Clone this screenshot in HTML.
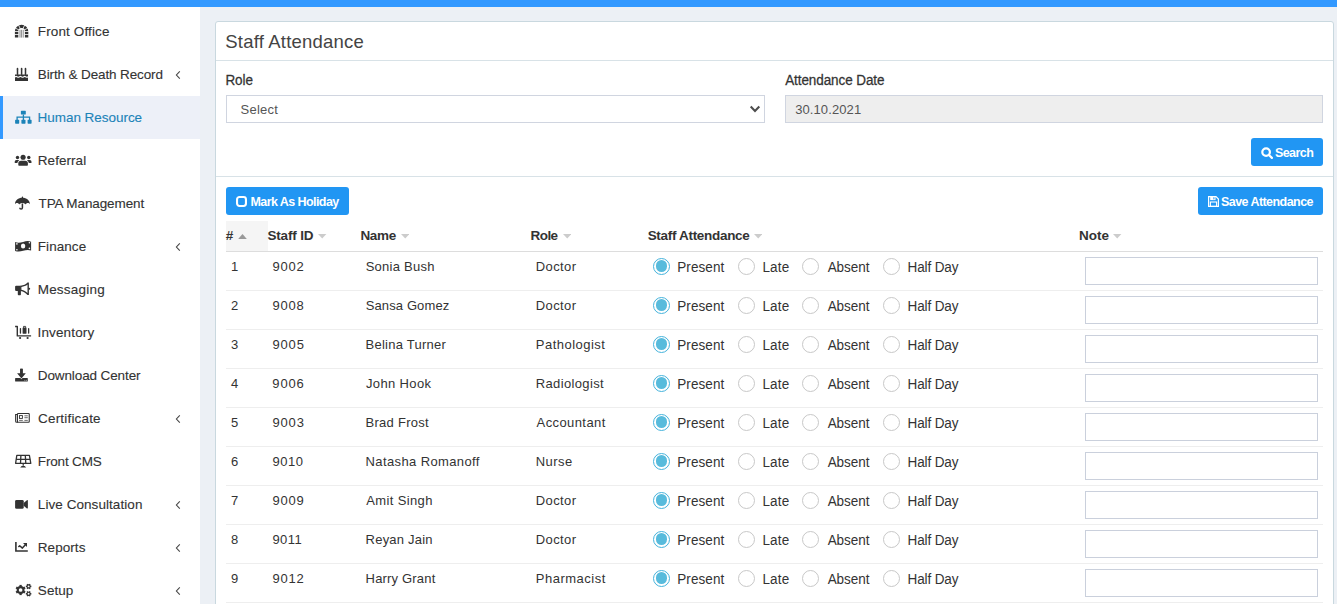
<!DOCTYPE html>
<html>
<head>
<meta charset="utf-8">
<title>Staff Attendance</title>
<style>
*{box-sizing:border-box;margin:0;padding:0}
html,body{width:1337px;height:604px;overflow:hidden}
body{background:#ecf0f5;font-family:"Liberation Sans",sans-serif;font-size:13px;color:#333;position:relative}
span{white-space:nowrap}
.topbar{position:absolute;left:0;top:0;width:1337px;height:7px;background:#3399ff}
.sidebar{position:absolute;left:0;top:7px;width:200px;height:597px;background:#fff;overflow:hidden}
.mi{position:absolute;left:0;width:200px;height:43px;color:#333;font-size:13.5px}
.mi .tx{position:absolute;left:38px;top:0px;line-height:43px;white-space:nowrap;-webkit-text-stroke:0.12px currentColor}
.mi svg.ic{position:absolute;left:0;top:0;width:36px;height:43px;color:#333}
.mi .ch{position:absolute;left:174px;top:16px;width:8px;height:12px}
.mi.act{background:#edf0f8;border-left:3px solid #3399ff;color:#1c83b8}
.mi.act .tx{left:35px}
.mi.act svg.ic{color:#1c83b8}
.panel{position:absolute;left:215px;top:21px;width:1119px;height:600px;background:#fff;border:1px solid #c9d8df;border-radius:3px}
.ptitle{position:absolute;left:10px;top:0px;height:39px;line-height:39px;font-size:18.5px;color:#444;white-space:nowrap}
.hr{position:absolute;left:0;width:1117px;height:1px;background:#d8e2e7}
.lbl{position:absolute;font-size:13.5px;color:#333;white-space:nowrap;line-height:16px;-webkit-text-stroke:0.25px #333;transform:scale(1,1.04);transform-origin:0 70%}
.sel{position:absolute;left:10px;top:73px;width:539px;height:28px;border:1px solid #d0d5e0;background:#fff;font-size:13px;line-height:27px;padding-left:14px;color:#555}
.sel .caret{position:absolute;right:3.4px;top:9.3px;width:12px;height:8px}
.dt{position:absolute;left:569px;top:73px;width:538px;height:28px;border:1px solid #d0d5e0;background:#eee;font-size:13px;line-height:27px;padding-left:10px;color:#555}
.btn{position:absolute;height:28px;background:#2196f3;color:#fff;border-radius:3px;font-size:12.5px;white-space:nowrap;font-weight:bold}
.btn .bi{position:absolute}
.btn .bt{position:absolute;top:1px;line-height:29px;transform:scale(1,1.03);transform-origin:0 62%}
table{position:absolute;left:10px;top:199px;width:1097px;border-collapse:collapse;table-layout:fixed}
th{height:30px;text-align:left;font-size:13.5px;font-weight:bold;color:#333;border-bottom:1px solid #ddd;padding:0;white-space:nowrap;vertical-align:middle}
th.srt{background:#f5f5f5}
.so{position:absolute;width:8.4px;height:4.7px;z-index:2}
td{height:39px;border-bottom:1px solid #eee;padding:0 0 0 5px;font-size:13px;color:#333;vertical-align:top;white-space:nowrap}
td .t{display:inline-block;line-height:15px;padding-top:7px}
.att{position:relative;height:38px}
.rd{position:absolute;top:6px;width:17px;height:17px;border:1px solid #c8c8c8;border-radius:50%;background:#fff}
.rd.on{left:0;border:1px solid #45b3dc}
.rd.on i{position:absolute;left:1.8px;top:1.8px;width:11.4px;height:11.4px;border-radius:50%;background:#58bbdc}
.rd.r2{left:85px}.rd.r3{left:149px}.rd.r4{left:230px}
.rl{position:absolute;top:8px;font-size:13.5px;line-height:16px;color:#333;transform:scale(1,1.08);transform-origin:0 78%}
.l1{left:25px}.l2{left:110px}.l3{left:174px}.l4{left:255px}
.note{display:block;margin-top:5px;width:233px;height:28px;border:1px solid #cad0dc;background:#fff}

</style>
</head>
<body>
<div class="topbar"></div>
<div class="sidebar">
<div class="mi" style="top:3px"><svg class="ic" style="left:0px" viewBox="0 0 36 43"><path fill-rule="evenodd" fill="currentColor" d="M14.9 27.6 V21.4 A6.7 6.7 0 0 1 28.3 21.4 V27.6 H24.9 V21.4 A3.3 3.3 0 0 0 18.3 21.4 V27.6 Z"/><path d="M14.4 21.5 H18.8 M24.4 21.5 H28.8" stroke="#fff" stroke-width="0.8"/><path d="M14.4 24.5 H18.8 M24.4 24.5 H28.8" stroke="#fff" stroke-width="0.8"/><path d="M19.13 20.09 L15.07 17.93" stroke="#fff" stroke-width="0.8"/><path d="M20.37 18.88 L18.36 14.75" stroke="#fff" stroke-width="0.8"/><path d="M22.83 18.88 L24.84 14.75" stroke="#fff" stroke-width="0.8"/><path d="M24.07 20.09 L28.13 17.93" stroke="#fff" stroke-width="0.8"/><path d="M20.0 19.8 V27.6" stroke="currentColor" stroke-width="0.75" opacity="0.75"/><path d="M21.6 19.8 V27.6" stroke="currentColor" stroke-width="0.75" opacity="0.75"/><path d="M23.2 19.8 V27.6" stroke="currentColor" stroke-width="0.75" opacity="0.75"/></svg><span id="m0" class="tx" style="letter-spacing:0.125px;margin-left:-0.20px">Front Office</span></div>
<div class="mi" style="top:46px"><svg class="ic" style="left:0px" viewBox="0 0 36 43"><rect x="16.75" y="16.3" width="1.5" height="5.6" fill="currentColor"/><ellipse cx="17.5" cy="15.9" rx="0.85" ry="1.1" fill="currentColor"/><rect x="20.85" y="16.3" width="1.5" height="5.6" fill="currentColor"/><ellipse cx="21.6" cy="15.9" rx="0.85" ry="1.1" fill="currentColor"/><rect x="24.75" y="16.3" width="1.5" height="5.6" fill="currentColor"/><ellipse cx="25.5" cy="15.9" rx="0.85" ry="1.1" fill="currentColor"/><path fill="currentColor" d="M15 21.6 H28 V23.2 q-1.08 0.9 -2.17 0 t-2.17 0 t-2.17 0 t-2.17 0 t-2.17 0 t-2.15 0 Z"/><path fill="currentColor" d="M15 28 V24.4 q1.08 -0.9 2.17 0 t2.17 0 t2.17 0 t2.17 0 t2.17 0 t2.15 0 V28 Z"/></svg><span id="m1" class="tx" style="letter-spacing:-0.130px;margin-left:-0.20px">Birth &amp; Death Record</span><svg class="ch" viewBox="0 0 8 12"><path d="M5.8 2.3 L2.4 6 L5.8 9.7" fill="none" stroke="#444" stroke-width="1.1"/></svg></div>
<div class="mi act" style="top:89px"><svg class="ic" style="left:-3px" viewBox="0 0 36 43"><rect x="20.9" y="14.8" width="4.9" height="3.8" rx="0.6" fill="currentColor"/><path d="M23.4 18.4 V24 M17.1 24 V21.1 H29.6 V24" stroke="currentColor" stroke-width="1.3" fill="none"/><rect x="15.1" y="23.8" width="4.1" height="3.9" rx="0.6" fill="currentColor"/><rect x="21.4" y="23.8" width="4.1" height="3.9" rx="0.6" fill="currentColor"/><rect x="27.6" y="23.8" width="4.0" height="3.9" rx="0.6" fill="currentColor"/></svg><span id="m2" class="tx" style="letter-spacing:-0.035px;margin-left:-0.49px">Human Resource</span></div>
<div class="mi" style="top:132px"><svg class="ic" style="left:0px" viewBox="0 0 36 43"><circle cx="23.1" cy="18.3" r="2.55" fill="currentColor"/><path fill="currentColor" d="M18.3 26.1 V24.6 A2.8 2.8 0 0 1 21.1 21.8 H25.1 A2.8 2.8 0 0 1 27.9 24.6 V26.1 A0.7 0.7 0 0 1 27.2 26.8 H19 A0.7 0.7 0 0 1 18.3 26.1 Z"/><circle cx="17.5" cy="18.5" r="1.7" fill="currentColor"/><circle cx="28.8" cy="18.5" r="1.7" fill="currentColor"/><path fill="currentColor" d="M14.7 23.4 V22.8 A1.7 1.7 0 0 1 16.4 21.1 H18.1 A1.7 1.7 0 0 1 19.3 21.6 C18.2 22.2 17.5 23.1 17.4 24 H15.3 A0.6 0.6 0 0 1 14.7 23.4 Z"/><path fill="currentColor" d="M31.5 23.4 V22.8 A1.7 1.7 0 0 0 29.8 21.1 H28.1 A1.7 1.7 0 0 0 26.9 21.6 C28 22.2 28.7 23.1 28.8 24 H30.9 A0.6 0.6 0 0 0 31.5 23.4 Z"/></svg><span id="m3" class="tx" style="letter-spacing:0.043px;margin-left:-0.20px">Referral</span></div>
<div class="mi" style="top:175px"><svg class="ic" style="left:0px" viewBox="0 0 36 43"><rect x="21.8" y="14.6" width="1.2" height="1.8" rx="0.4" fill="currentColor"/><path fill="currentColor" d="M15.0 22.2 C15.0 18.3 18.3 15.8 22.4 15.8 C26.5 15.8 29.9 18.3 29.9 22.2 C29 20.5 26.5 20.5 25.5 22.5 C24.4 20.5 20.4 20.5 19.3 22.5 C18.3 20.5 15.9 20.5 15.0 22.2 Z"/><path d="M22.4 21.4 V25.7 A1.3 1.3 0 0 1 19.8 25.7" stroke="currentColor" stroke-width="1.5" fill="none" stroke-linecap="butt"/></svg><span id="m4" class="tx" style="letter-spacing:-0.109px;margin-left:0.55px">TPA Management</span></div>
<div class="mi" style="top:218px"><svg class="ic" style="left:0px" viewBox="0 0 36 43"><path fill="currentColor" d="M15.1 17.1 C18 18.3 20.5 17.7 23.1 16.9 C26 16 28.5 15.7 31.1 16.7 V25.5 C28.5 24.5 26 24.9 23.1 25.8 C20.5 26.6 18 27.1 15.1 25.9 Z"/><ellipse cx="23.1" cy="21" rx="2.2" ry="2.5" fill="#fff"/><circle cx="16.9" cy="18.9" r="0.8" fill="#fff"/><circle cx="16.9" cy="24.7" r="0.8" fill="#fff"/><circle cx="29.4" cy="17.7" r="0.8" fill="#fff"/><circle cx="29.4" cy="23.4" r="0.8" fill="#fff"/></svg><span id="m5" class="tx" style="letter-spacing:0.057px;margin-left:-0.20px">Finance</span><svg class="ch" viewBox="0 0 8 12"><path d="M5.8 2.3 L2.4 6 L5.8 9.7" fill="none" stroke="#444" stroke-width="1.1"/></svg></div>
<div class="mi" style="top:261px"><svg class="ic" style="left:0px" viewBox="0 0 36 43"><path fill="currentColor" d="M16.1 17.8 H20.9 V22.9 H16.1 A1 1 0 0 1 15.1 21.9 V18.8 A1 1 0 0 1 16.1 17.8 Z"/><path fill="currentColor" fill-rule="evenodd" d="M20.5 17.8 C23.6 17.6 26 16.4 27.5 14.6 H28.9 V27 H27.5 C26 25 23.6 23.1 20.5 22.9 Z M21.4 19 C23.9 18.7 26 17.9 27.5 16.6 V24.9 C26 23.7 23.9 22.2 21.4 21.8 Z"/><circle cx="29.2" cy="20.8" r="1" fill="currentColor"/><path fill="currentColor" d="M17.8 22.5 H20.9 V26.6 A0.7 0.7 0 0 1 20.2 27.3 H18.5 A0.7 0.7 0 0 1 17.8 26.6 Z"/></svg><span id="m6" class="tx" style="letter-spacing:0.240px;margin-left:-0.37px">Messaging</span></div>
<div class="mi" style="top:304px"><svg class="ic" style="left:0px" viewBox="0 0 36 43"><path d="M15.1 15.5 H17.3 V24.9 H31.1" stroke="currentColor" stroke-width="1.4" fill="none" stroke-linejoin="round"/><circle cx="20.1" cy="27" r="1.1" fill="currentColor"/><circle cx="27.6" cy="27" r="1.1" fill="currentColor"/><rect x="22.6" y="16.6" width="3.9" height="6.1" rx="0.4" fill="currentColor"/><path d="M23.5 16.8 V15.4 H25.6 V16.8" stroke="currentColor" stroke-width="0.9" fill="none"/><rect x="19.8" y="17.1" width="1.3" height="5.6" rx="0.6" fill="currentColor"/><rect x="28.0" y="17.1" width="1.3" height="5.6" rx="0.6" fill="currentColor"/></svg><span id="m7" class="tx" style="letter-spacing:0.146px;margin-left:-0.49px">Inventory</span></div>
<div class="mi" style="top:347px"><svg class="ic" style="left:0px" viewBox="0 0 36 43"><rect x="15.1" y="24" width="12.7" height="3.5" rx="0.6" fill="currentColor"/><path d="M20.2 14.7 H22.7 V19.3 H25.8 L21.45 24.5 L17.1 19.3 H20.2 Z" fill="currentColor" stroke="#fff" stroke-width="1.1" paint-order="stroke"/><rect x="20.2" y="14.7" width="2.5" height="5" rx="0.4" fill="currentColor"/><circle cx="24.9" cy="26.3" r="0.45" fill="#fff"/><circle cx="26.3" cy="26.3" r="0.45" fill="#fff"/></svg><span id="m8" class="tx" style="letter-spacing:-0.114px;margin-left:-0.20px">Download Center</span></div>
<div class="mi" style="top:390px"><svg class="ic" style="left:0px" viewBox="0 0 36 43"><rect x="17.45" y="16.55" width="11.8" height="8.7" rx="0.7" fill="none" stroke="currentColor" stroke-width="1.1"/><path d="M17.4 17.5 H15.65 V24.3 A1 1 0 0 0 16.65 25.3 H18" fill="none" stroke="currentColor" stroke-width="1.1"/><rect x="19.5" y="18.6" width="2.9" height="2.8" fill="none" stroke="currentColor" stroke-width="0.9"/><path d="M24.4 18.8 H27.8 M24.4 20.7 H27.8 M19.1 23.4 H22.8 M24.4 23.4 H27.8" stroke="currentColor" stroke-width="0.9" opacity="0.8"/></svg><span id="m9" class="tx" style="letter-spacing:0.180px;margin-left:0.05px">Certificate</span><svg class="ch" viewBox="0 0 8 12"><path d="M5.8 2.3 L2.4 6 L5.8 9.7" fill="none" stroke="#444" stroke-width="1.1"/></svg></div>
<div class="mi" style="top:433px"><svg class="ic" style="left:0px" viewBox="0 0 36 43"><path d="M16.8 15.45 H29.4 L30.8 23.35 H15.6 Z" fill="none" stroke="currentColor" stroke-width="1.3" stroke-linejoin="round"/><path d="M16.1 19.3 H30.2 M20.9 15.4 L20.5 23.4 M25.3 15.4 L25.8 23.4" stroke="currentColor" stroke-width="1.3" fill="none"/><rect x="22.6" y="23.6" width="1.2" height="2.2" fill="currentColor"/><path d="M20.2 27.5 L21.7 25.9 H24.7 L26.2 27.5 Z" fill="currentColor"/></svg><span id="m10" class="tx" style="letter-spacing:-0.169px;margin-left:-0.20px">Front CMS</span></div>
<div class="mi" style="top:476px"><svg class="ic" style="left:0px" viewBox="0 0 36 43"><rect x="15.1" y="16.9" width="8.6" height="8.9" rx="1.4" fill="currentColor"/><path d="M23.6 19.9 L26.9 17.3 Q27.9 16.7 27.9 17.9 V24.8 Q27.9 26 26.9 25.4 L23.6 22.8 Z" fill="currentColor"/></svg><span id="m11" class="tx" style="letter-spacing:0.063px;margin-left:-0.20px">Live Consultation</span><svg class="ch" viewBox="0 0 8 12"><path d="M5.8 2.3 L2.4 6 L5.8 9.7" fill="none" stroke="#444" stroke-width="1.1"/></svg></div>
<div class="mi" style="top:519px"><svg class="ic" style="left:0px" viewBox="0 0 36 43"><path d="M15.9 16 V25 H27.8" stroke="currentColor" stroke-width="1.6" fill="none"/><path d="M18.4 21 L19.7 19.7 L22.4 22.1 L25.4 18.7" stroke="currentColor" stroke-width="1.5" fill="none" stroke-linejoin="round"/><path d="M23.0 17.0 H27.0 V21.0 Z" fill="currentColor"/></svg><span id="m12" class="tx" style="letter-spacing:0.058px;margin-left:-0.20px">Reports</span><svg class="ch" viewBox="0 0 8 12"><path d="M5.8 2.3 L2.4 6 L5.8 9.7" fill="none" stroke="#444" stroke-width="1.1"/></svg></div>
<div class="mi" style="top:562px"><svg class="ic" style="left:0px" viewBox="0 0 36 43"><circle cx="20.6" cy="21.0" r="3.9" fill="currentColor"/><path d="M20.6 21.0 L20.60 26.10" stroke="currentColor" stroke-width="2.3" fill="none"/><path d="M20.6 21.0 L16.18 23.55" stroke="currentColor" stroke-width="2.3" fill="none"/><path d="M20.6 21.0 L16.18 18.45" stroke="currentColor" stroke-width="2.3" fill="none"/><path d="M20.6 21.0 L20.60 15.90" stroke="currentColor" stroke-width="2.3" fill="none"/><path d="M20.6 21.0 L25.02 18.45" stroke="currentColor" stroke-width="2.3" fill="none"/><path d="M20.6 21.0 L25.02 23.55" stroke="currentColor" stroke-width="2.3" fill="none"/><circle cx="20.6" cy="21.0" r="1.85" fill="#fff"/><circle cx="28.6" cy="17.4" r="2.1" fill="currentColor"/><path d="M28.6 17.4 L31.35 17.40" stroke="currentColor" stroke-width="1.5" fill="none"/><path d="M28.6 17.4 L29.98 19.78" stroke="currentColor" stroke-width="1.5" fill="none"/><path d="M28.6 17.4 L27.23 19.78" stroke="currentColor" stroke-width="1.5" fill="none"/><path d="M28.6 17.4 L25.85 17.40" stroke="currentColor" stroke-width="1.5" fill="none"/><path d="M28.6 17.4 L27.23 15.02" stroke="currentColor" stroke-width="1.5" fill="none"/><path d="M28.6 17.4 L29.98 15.02" stroke="currentColor" stroke-width="1.5" fill="none"/><circle cx="28.6" cy="17.4" r="0.95" fill="#fff"/><circle cx="28.6" cy="24.8" r="2.1" fill="currentColor"/><path d="M28.6 24.8 L31.35 24.80" stroke="currentColor" stroke-width="1.5" fill="none"/><path d="M28.6 24.8 L29.98 27.18" stroke="currentColor" stroke-width="1.5" fill="none"/><path d="M28.6 24.8 L27.23 27.18" stroke="currentColor" stroke-width="1.5" fill="none"/><path d="M28.6 24.8 L25.85 24.80" stroke="currentColor" stroke-width="1.5" fill="none"/><path d="M28.6 24.8 L27.23 22.42" stroke="currentColor" stroke-width="1.5" fill="none"/><path d="M28.6 24.8 L29.98 22.42" stroke="currentColor" stroke-width="1.5" fill="none"/><circle cx="28.6" cy="24.8" r="0.95" fill="#fff"/></svg><span id="m13" class="tx" style="letter-spacing:0.034px;margin-left:-0.17px">Setup</span><svg class="ch" viewBox="0 0 8 12"><path d="M5.8 2.3 L2.4 6 L5.8 9.7" fill="none" stroke="#444" stroke-width="1.1"/></svg></div>
</div>
<div class="panel">
<div class="ptitle"><span id="title" class="" style="letter-spacing:0.205px;margin-left:-0.74px">Staff Attendance</span></div>
<div class="hr" style="top:38px"></div>
<div class="lbl" style="left:10px;top:50.5px"><span id="lrole" class="" style="letter-spacing:-0.072px;margin-left:-0.59px">Role</span></div>
<div class="lbl" style="left:569px;top:50.5px"><span id="ldate" class="" style="letter-spacing:-0.090px;margin-left:0.17px">Attendance Date</span></div>
<div class="sel"><span id="selt" class="" style="letter-spacing:0.238px;margin-left:-0.41px">Select</span><svg class="caret" viewBox="0 0 12 8"><path d="M1.7 1.6 L6 5.9 L10.3 1.6" fill="none" stroke="#4d4d4d" stroke-width="2.1"/></svg></div>
<div class="dt"><span id="datet" class="" style="letter-spacing:0.111px;margin-left:-0.89px">30.10.2021</span></div>
<div class="btn" style="left:1035px;top:116px;width:72px"><svg class="bi" style="left:9.5px;top:9px;width:12.5px;height:12.5px" viewBox="0 0 12.5 12.5"><circle cx="5.1" cy="5.1" r="3.8" fill="none" stroke="#fff" stroke-width="2.2"/><path d="M8 8 L10.9 10.9" stroke="#fff" stroke-width="2.2" stroke-linecap="round"/></svg><span class="bt" style="left:24px"><span id="bsearch" class="" style="letter-spacing:-0.573px;margin-left:-0.06px">Search</span></span></div>
<div class="hr" style="top:154px"></div>
<div class="btn" style="left:10px;top:165px;width:123px"><svg class="bi" style="left:10px;top:9px;width:11px;height:11px" viewBox="0 0 11 11"><rect x="1.05" y="1.05" width="8.9" height="8.9" rx="2.4" fill="none" stroke="#fff" stroke-width="2.1"/></svg><span class="bt" style="left:25px"><span id="bmark" class="" style="letter-spacing:-0.573px;margin-left:-0.54px">Mark As Holiday</span></span></div>
<div class="btn" style="left:982px;top:165px;width:125px"><svg class="bi" style="left:10px;top:9px;width:11px;height:11px" viewBox="0 0 11 11"><path d="M0.6 0.6 H8 L10.4 3 V10.4 H0.6 Z" fill="none" stroke="#fff" stroke-width="1.2"/><rect x="2.2" y="0.6" width="5.3" height="3.5" fill="#fff"/><rect x="5.4" y="1.2" width="1.0" height="2.2" fill="#2196f3"/><rect x="2.4" y="6" width="6.2" height="4.4" fill="none" stroke="#fff" stroke-width="1.1"/></svg><span class="bt" style="left:23px"><span id="bsave" class="" style="letter-spacing:-0.554px;margin-left:-0.00px">Save Attendance</span></span></div>
<svg class="so" style="left:22.1px;top:212.3px;width:9px;height:5.2px" viewBox="0 0 9 5.2"><path d="M0 5.2 L4.5 0 L9 5.2 Z" fill="#999"/></svg><svg class="so" style="left:102.3px;top:212.1px" viewBox="0 0 8.4 4.7"><path d="M0 0 L8.4 0 L4.2 4.5 Z" fill="#ccc"/></svg><svg class="so" style="left:184.8px;top:212.1px" viewBox="0 0 8.4 4.7"><path d="M0 0 L8.4 0 L4.2 4.5 Z" fill="#ccc"/></svg><svg class="so" style="left:346.5px;top:212.1px" viewBox="0 0 8.4 4.7"><path d="M0 0 L8.4 0 L4.2 4.5 Z" fill="#ccc"/></svg><svg class="so" style="left:537.9px;top:212.1px" viewBox="0 0 8.4 4.7"><path d="M0 0 L8.4 0 L4.2 4.5 Z" fill="#ccc"/></svg><svg class="so" style="left:897.4px;top:212.1px" viewBox="0 0 8.4 4.7"><path d="M0 0 L8.4 0 L4.2 4.5 Z" fill="#ccc"/></svg>
<table>
<colgroup><col style="width:42px"><col style="width:93px"><col style="width:170px"><col style="width:117px"><col style="width:432px"><col style="width:243px"></colgroup>
<tr><th class="srt"><span id="h0" class="ht" style="letter-spacing:0.000px;margin-left:-0.33px">#</span></th><th><span id="h1" class="ht" style="letter-spacing:-0.159px;margin-left:-0.64px">Staff ID</span></th><th><span id="h2" class="ht" style="letter-spacing:-0.337px;margin-left:-0.57px">Name</span></th><th><span id="h3" class="ht" style="letter-spacing:-0.542px;margin-left:-0.52px">Role</span></th><th><span id="h4" class="ht" style="letter-spacing:-0.308px;margin-left:-0.37px">Staff Attendance</span></th><th><span id="h5" class="ht" style="letter-spacing:-0.059px;margin-left:-0.95px">Note</span></th></tr>
<tr><td><span id="r0c0" class="t">1</span></td><td><span id="r0c1" class="t" style="letter-spacing:0.830px;margin-left:-0.63px">9002</span></td><td><span id="r0c2" class="t" style="letter-spacing:0.257px;margin-left:-0.36px">Sonia Bush</span></td><td><span id="r0c3" class="t" style="letter-spacing:0.406px;margin-left:-0.25px">Doctor</span></td><td><div class="att"><span class="rd on"><i></i></span><span id="r0p" class="rl l1" style="letter-spacing:0.078px;margin-left:-0.72px">Present</span><span class="rd r2"></span><span id="r0l" class="rl l2" style="letter-spacing:0.176px;margin-left:-0.57px">Late</span><span class="rd r3"></span><span id="r0a" class="rl l3" style="letter-spacing:-0.048px;margin-left:0.64px">Absent</span><span class="rd r4"></span><span id="r0h" class="rl l4" style="letter-spacing:-0.105px;margin-left:-0.52px">Half Day</span></div></td><td><span class="note"></span></td></tr>
<tr><td><span id="r1c0" class="t">2</span></td><td><span id="r1c1" class="t" style="letter-spacing:0.832px;margin-left:-0.63px">9008</span></td><td><span id="r1c2" class="t" style="letter-spacing:0.127px;margin-left:-0.36px">Sansa Gomez</span></td><td><span id="r1c3" class="t" style="letter-spacing:0.406px;margin-left:-0.25px">Doctor</span></td><td><div class="att"><span class="rd on"><i></i></span><span id="r1p" class="rl l1" style="letter-spacing:0.078px;margin-left:-0.72px">Present</span><span class="rd r2"></span><span id="r1l" class="rl l2" style="letter-spacing:0.176px;margin-left:-0.57px">Late</span><span class="rd r3"></span><span id="r1a" class="rl l3" style="letter-spacing:-0.048px;margin-left:0.64px">Absent</span><span class="rd r4"></span><span id="r1h" class="rl l4" style="letter-spacing:-0.105px;margin-left:-0.52px">Half Day</span></div></td><td><span class="note"></span></td></tr>
<tr><td><span id="r2c0" class="t">3</span></td><td><span id="r2c1" class="t" style="letter-spacing:0.860px;margin-left:-0.63px">9005</span></td><td><span id="r2c2" class="t" style="letter-spacing:0.234px;margin-left:-0.41px">Belina Turner</span></td><td><span id="r2c3" class="t" style="letter-spacing:0.489px;margin-left:-0.25px">Pathologist</span></td><td><div class="att"><span class="rd on"><i></i></span><span id="r2p" class="rl l1" style="letter-spacing:0.078px;margin-left:-0.72px">Present</span><span class="rd r2"></span><span id="r2l" class="rl l2" style="letter-spacing:0.176px;margin-left:-0.57px">Late</span><span class="rd r3"></span><span id="r2a" class="rl l3" style="letter-spacing:-0.048px;margin-left:0.64px">Absent</span><span class="rd r4"></span><span id="r2h" class="rl l4" style="letter-spacing:-0.105px;margin-left:-0.52px">Half Day</span></div></td><td><span class="note"></span></td></tr>
<tr><td><span id="r3c0" class="t">4</span></td><td><span id="r3c1" class="t" style="letter-spacing:0.852px;margin-left:-0.65px">9006</span></td><td><span id="r3c2" class="t" style="letter-spacing:0.360px;margin-left:-0.07px">John Hook</span></td><td><span id="r3c3" class="t" style="letter-spacing:0.362px;margin-left:-0.25px">Radiologist</span></td><td><div class="att"><span class="rd on"><i></i></span><span id="r3p" class="rl l1" style="letter-spacing:0.078px;margin-left:-0.72px">Present</span><span class="rd r2"></span><span id="r3l" class="rl l2" style="letter-spacing:0.176px;margin-left:-0.57px">Late</span><span class="rd r3"></span><span id="r3a" class="rl l3" style="letter-spacing:-0.048px;margin-left:0.64px">Absent</span><span class="rd r4"></span><span id="r3h" class="rl l4" style="letter-spacing:-0.105px;margin-left:-0.52px">Half Day</span></div></td><td><span class="note"></span></td></tr>
<tr><td><span id="r4c0" class="t">5</span></td><td><span id="r4c1" class="t" style="letter-spacing:0.862px;margin-left:-0.63px">9003</span></td><td><span id="r4c2" class="t" style="letter-spacing:0.258px;margin-left:-0.41px">Brad Frost</span></td><td><span id="r4c3" class="t" style="letter-spacing:0.405px;margin-left:0.58px">Accountant</span></td><td><div class="att"><span class="rd on"><i></i></span><span id="r4p" class="rl l1" style="letter-spacing:0.078px;margin-left:-0.72px">Present</span><span class="rd r2"></span><span id="r4l" class="rl l2" style="letter-spacing:0.176px;margin-left:-0.57px">Late</span><span class="rd r3"></span><span id="r4a" class="rl l3" style="letter-spacing:-0.048px;margin-left:0.64px">Absent</span><span class="rd r4"></span><span id="r4h" class="rl l4" style="letter-spacing:-0.105px;margin-left:-0.52px">Half Day</span></div></td><td><span class="note"></span></td></tr>
<tr><td><span id="r5c0" class="t">6</span></td><td><span id="r5c1" class="t" style="letter-spacing:0.560px;margin-left:-0.63px">9010</span></td><td><span id="r5c2" class="t" style="letter-spacing:0.387px;margin-left:-0.51px">Natasha Romanoff</span></td><td><span id="r5c3" class="t" style="letter-spacing:0.439px;margin-left:-0.27px">Nurse</span></td><td><div class="att"><span class="rd on"><i></i></span><span id="r5p" class="rl l1" style="letter-spacing:0.078px;margin-left:-0.72px">Present</span><span class="rd r2"></span><span id="r5l" class="rl l2" style="letter-spacing:0.176px;margin-left:-0.57px">Late</span><span class="rd r3"></span><span id="r5a" class="rl l3" style="letter-spacing:-0.048px;margin-left:0.64px">Absent</span><span class="rd r4"></span><span id="r5h" class="rl l4" style="letter-spacing:-0.105px;margin-left:-0.52px">Half Day</span></div></td><td><span class="note"></span></td></tr>
<tr><td><span id="r6c0" class="t">7</span></td><td><span id="r6c1" class="t" style="letter-spacing:0.792px;margin-left:-0.61px">9009</span></td><td><span id="r6c2" class="t" style="letter-spacing:0.374px;margin-left:0.20px">Amit Singh</span></td><td><span id="r6c3" class="t" style="letter-spacing:0.406px;margin-left:-0.25px">Doctor</span></td><td><div class="att"><span class="rd on"><i></i></span><span id="r6p" class="rl l1" style="letter-spacing:0.078px;margin-left:-0.72px">Present</span><span class="rd r2"></span><span id="r6l" class="rl l2" style="letter-spacing:0.176px;margin-left:-0.57px">Late</span><span class="rd r3"></span><span id="r6a" class="rl l3" style="letter-spacing:-0.048px;margin-left:0.64px">Absent</span><span class="rd r4"></span><span id="r6h" class="rl l4" style="letter-spacing:-0.105px;margin-left:-0.52px">Half Day</span></div></td><td><span class="note"></span></td></tr>
<tr><td><span id="r7c0" class="t">8</span></td><td><span id="r7c1" class="t" style="letter-spacing:0.432px;margin-left:-0.63px">9011</span></td><td><span id="r7c2" class="t" style="letter-spacing:0.216px;margin-left:-0.41px">Reyan Jain</span></td><td><span id="r7c3" class="t" style="letter-spacing:0.406px;margin-left:-0.25px">Doctor</span></td><td><div class="att"><span class="rd on"><i></i></span><span id="r7p" class="rl l1" style="letter-spacing:0.078px;margin-left:-0.72px">Present</span><span class="rd r2"></span><span id="r7l" class="rl l2" style="letter-spacing:0.176px;margin-left:-0.57px">Late</span><span class="rd r3"></span><span id="r7a" class="rl l3" style="letter-spacing:-0.048px;margin-left:0.64px">Absent</span><span class="rd r4"></span><span id="r7h" class="rl l4" style="letter-spacing:-0.105px;margin-left:-0.52px">Half Day</span></div></td><td><span class="note"></span></td></tr>
<tr><td><span id="r8c0" class="t">9</span></td><td><span id="r8c1" class="t" style="letter-spacing:0.830px;margin-left:-0.63px">9012</span></td><td><span id="r8c2" class="t" style="letter-spacing:0.175px;margin-left:-0.41px">Harry Grant</span></td><td><span id="r8c3" class="t" style="letter-spacing:0.507px;margin-left:-0.25px">Pharmacist</span></td><td><div class="att"><span class="rd on"><i></i></span><span id="r8p" class="rl l1" style="letter-spacing:0.078px;margin-left:-0.72px">Present</span><span class="rd r2"></span><span id="r8l" class="rl l2" style="letter-spacing:0.176px;margin-left:-0.57px">Late</span><span class="rd r3"></span><span id="r8a" class="rl l3" style="letter-spacing:-0.048px;margin-left:0.64px">Absent</span><span class="rd r4"></span><span id="r8h" class="rl l4" style="letter-spacing:-0.105px;margin-left:-0.52px">Half Day</span></div></td><td><span class="note"></span></td></tr>
</table>
</div>
</body>
</html>
